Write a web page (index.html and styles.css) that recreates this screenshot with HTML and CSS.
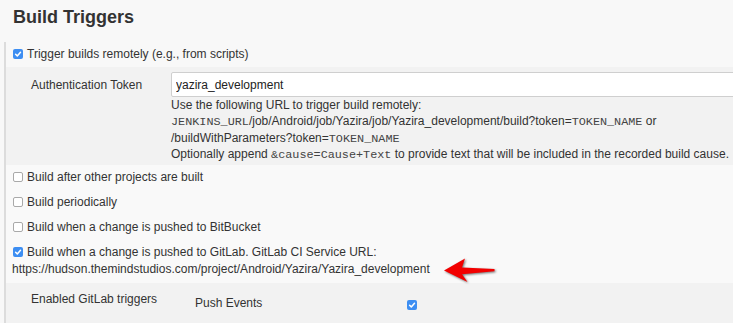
FILE: index.html
```html
<!DOCTYPE html>
<html>
<head>
<meta charset="utf-8">
<link rel="stylesheet" href="styles.css">
</head>
<body>
<h1 class="title">Build Triggers</h1>
<div class="section">
  <div class="row">
    <span class="cb checked"><svg viewBox="0 0 10 10"><path d="M2.6 5.2 L4.3 6.9 L7.5 3.2" fill="none" stroke="#fff" stroke-width="1.5" stroke-linecap="round" stroke-linejoin="round"/></svg></span>Trigger builds remotely (e.g., from scripts)
  </div>
  <div class="nested top">
    <div class="field">
      <div class="label">Authentication Token</div>
      <div class="control">
        <input class="token" type="text" value="yazira_development">
        <div class="help">Use the following URL to trigger build remotely:<br><span class="tt">JENKINS_URL</span>/job/Android/job/Yazira/job/Yazira_development/build?token=<span class="tt">TOKEN_NAME</span> or<br>/buildWithParameters?token=<span class="tt">TOKEN_NAME</span><br>Optionally append <span class="tt">&amp;cause=Cause+Text</span> to provide text that will be included in the recorded build cause.</div>
      </div>
    </div>
  </div>
  <div class="row"><span class="cb"></span>Build after other projects are built</div>
  <div class="row"><span class="cb"></span>Build periodically</div>
  <div class="row"><span class="cb"></span>Build when a change is pushed to BitBucket</div>
  <div class="row gitlab"><span class="cb checked"><svg viewBox="0 0 10 10"><path d="M2.6 5.2 L4.3 6.9 L7.5 3.2" fill="none" stroke="#fff" stroke-width="1.5" stroke-linecap="round" stroke-linejoin="round"/></svg></span>Build when a change is pushed to GitLab. GitLab CI Service URL:<br>https://hudson.themindstudios.com/project/Android/Yazira/Yazira_development</div>
  <div class="nested bottom">
    <div class="label2">Enabled GitLab triggers</div>
    <div class="opt-name">Push Events</div>
    <span class="cb checked"><svg viewBox="0 0 10 10"><path d="M2.6 5.2 L4.3 6.9 L7.5 3.2" fill="none" stroke="#fff" stroke-width="1.5" stroke-linecap="round" stroke-linejoin="round"/></svg></span>
  </div>
</div>
<svg class="arrow" width="60" height="36" viewBox="440 252 60 36">
  <polygon points="444,270.5 465,258.5 462,267.6 494.5,269 494.5,271.2 462,274.2 467.5,282" fill="#f20000"/>
</svg>
</body>
</html>
```

FILE: styles.css
```css
html, body {
  margin: 0;
  padding: 0;
}
body {
  background: #f8f8f8;
  font-family: "Liberation Sans", Arial, sans-serif;
  font-size: 12px;
  color: #333;
  width: 733px;
  height: 323px;
  overflow: hidden;
  position: relative;
}
.title {
  margin: 0;
  height: 42px;
  line-height: 34px;
  padding-left: 13px;
  font-size: 18px;
  font-weight: bold;
  color: #333;
}
.section {
  margin-left: 4px;
  border-left: 2px solid #dcdcdc;
}
.row {
  height: 25px;
  line-height: 25px;
  padding-left: 6px;
  white-space: nowrap;
  background: #f9f9f9;
}
.row:first-child {
  background: #f8f8f8;
}
.row.gitlab {
  height: 43px;
  line-height: 17px;
  padding-top: 4px;
  box-sizing: border-box;
}
.cb {
  display: inline-block;
  width: 10px;
  height: 10px;
  box-sizing: border-box;
  border: 1px solid #a9a9a9;
  border-radius: 2px;
  background: #fff;
  margin: 0 4px 0 1px;
  vertical-align: -1px;
}
.cb.checked {
  border: none;
  background: #3d8ef2;
}
.cb svg {
  display: block;
  width: 10px;
  height: 10px;
}
.nested {
  background: #f2f2f2;
}
.nested.top {
  padding-top: 5px;
  height: 98px;
  box-sizing: border-box;
  overflow: hidden;
}
.field {
  display: flex;
}
.label {
  width: 140px;
  padding-left: 25px;
  padding-top: 6px;
  line-height: 14px;
  flex: none;
}
.control {
  flex: 1;
  min-width: 0;
}
.token {
  display: block;
  width: 600px;
  height: 25px;
  box-sizing: border-box;
  margin: 0;
  border: 1px solid #cfcfcf;
  border-radius: 2px;
  background: #fff;
  padding: 0 4px;
  font-family: "Liberation Sans", Arial, sans-serif;
  font-size: 12px;
  color: #222;
  outline: none;
}
.help {
  line-height: 16.4px;
  white-space: nowrap;
  color: #333;
}
.tt {
  font-family: "Liberation Mono", "DejaVu Sans Mono", monospace;
  font-size: 11.8px;
  line-height: 1;
  color: #444;
}
.nested.bottom {
  display: flex;
  align-items: flex-start;
  height: 40px;
  padding-left: 25px;
}
.label2 {
  width: 164px;
  padding-top: 9px;
  line-height: 14px;
  flex: none;
}
.opt-name {
  width: 212px;
  padding-top: 13px;
  line-height: 14px;
  flex: none;
}
.nested.bottom .cb {
  margin: 17px 0 0 0;
}
.arrow {
  position: absolute;
  left: 440px;
  top: 252px;
  filter: drop-shadow(1px 1.5px 1px rgba(0, 0, 0, 0.55));
}
```
